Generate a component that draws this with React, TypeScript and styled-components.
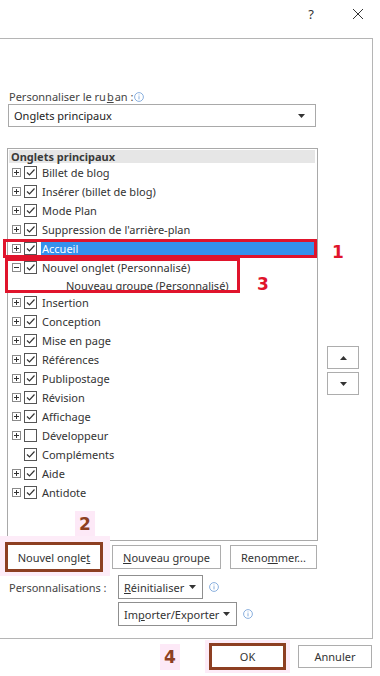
import styled, { createGlobalStyle, css } from "styled-components"

const GlobalStyle = createGlobalStyle`
  html, body {
    margin: 0;
    padding: 0;
    background: #ffffff;
  }
  body {
    font-family: "Noto Sans", "Open Sans", sans-serif;
    font-size: 11px;
    color: #2b2b2b;
  }
`

const Window = styled.div`
  width: 380px;
  height: 676px;
  position: relative;
  overflow: hidden;
  background: #fff;
`

const TitleBar = styled.div`
  height: 38px;
  display: flex;
  justify-content: flex-end;
  align-items: flex-start;
  gap: 38px;
  padding: 6px 16px 0 0;
  box-sizing: border-box;
`

const TitleButton = styled.div`
  height: 16px;
  display: flex;
  align-items: center;
  font-size: 13px;
  color: #333;
`

const Panel = styled.div`
  width: 373px;
  height: 601px;
  box-sizing: border-box;
  border: 1px solid #b5b5b5;
  border-left: none;
  display: flex;
  padding-top: 51px;
`

const LeftColumn = styled.div`
  width: 318px;
  display: flex;
  flex-direction: column;
`

const RightColumn = styled.div`
  flex: 1;
  display: flex;
  flex-direction: column;
  gap: 3px;
  padding: 256px 0 0 9px;
`

const FieldLabel = styled.div`
  padding-left: 9px;
  height: 14px;
  line-height: 14px;
  display: flex;
  align-items: center;
  gap: 1px;
  color: #444;
`

const DropDown = styled.div`
  margin: 0 0 0 8px;
  height: 23px;
  width: 308px;
  box-sizing: border-box;
  border: 1px solid #a9a9a9;
  display: flex;
  align-items: center;
  justify-content: space-between;
  padding: 0 10px 0 5px;
  color: #222;
`

const ListWrap = styled.div`
  position: relative;
  margin: 21px 0 0 7px;
`

const ListBox = styled.div`
  width: 311px;
  height: 393px;
  box-sizing: border-box;
  border: 1px solid #a9a9a9;
  padding: 1px 1px 0 1px;
  display: flex;
  flex-direction: column;
`

const ListHeader = styled.div`
  height: 13px;
  line-height: 13px;
  background: #e6e6e6;
  font-weight: 700;
  color: #3a3a3a;
  padding-left: 2px;
  margin-right: 1px;
`

const Row = styled.div<{ $h?: number }>`
  height: ${(p) => p.$h ?? 19}px;
  display: flex;
  align-items: center;
  padding-left: 3px;
  color: #333;
`

const Expander = styled.div<{ $hidden?: boolean }>`
  width: 9px;
  height: 9px;
  box-sizing: border-box;
  border: 1px solid #8a8a8a;
  position: relative;
  margin-right: 3px;
  visibility: ${(p) => (p.$hidden ? "hidden" : "visible")};
  &::before {
    content: "";
    position: absolute;
    left: 1px;
    top: 3px;
    width: 5px;
    height: 1px;
    background: #333;
  }
`

const Plus = styled(Expander)`
  &::after {
    content: "";
    position: absolute;
    left: 3px;
    top: 1px;
    width: 1px;
    height: 5px;
    background: #333;
  }
`

const Box = styled.div`
  width: 13px;
  height: 13px;
  box-sizing: border-box;
  border: 1px solid #555;
  margin-right: 4px;
  display: flex;
  align-items: center;
  justify-content: center;
  background: #fff;
`

const RowText = styled.span<{ $selected?: boolean; $indent?: number }>`
  height: 17px;
  line-height: 17px;
  padding: 0 2px 0 1px;
  margin-left: ${(p) => p.$indent ?? 0}px;
  ${(p) =>
    p.$selected &&
    css`
      flex: 1;
      background: #3591ec;
      color: #fff;
    `}
`

const Annotation = styled.div<{ $x: number; $y: number; $w: number; $h: number }>`
  position: absolute;
  left: ${(p) => p.$x}px;
  top: ${(p) => p.$y}px;
  width: ${(p) => p.$w}px;
  height: ${(p) => p.$h}px;
  box-sizing: border-box;
  border: 3px solid #e0142c;
`

const Mark = styled.div<{ $x: number; $y: number; $color: string; $halo?: boolean }>`
  position: absolute;
  left: ${(p) => p.$x}px;
  top: ${(p) => p.$y}px;
  font-family: "DejaVu Sans", sans-serif;
  font-weight: 700;
  font-size: 17px;
  line-height: 22px;
  color: ${(p) => p.$color};
  padding: 2px 4px;
  ${(p) =>
    p.$halo &&
    css`
      background: #fde9f7;
    `}
`

const ButtonRow = styled.div`
  display: flex;
  align-items: center;
  gap: 9px;
  margin-top: 1px;
  height: 30px;
  padding-left: 5px;
  position: relative;
`

const Halo = styled.div`
  position: absolute;
  left: -5px;
  top: -6px;
  width: 115px;
  height: 40px;
  background: #fdecf8;
`

const Button = styled.div<{ $w: number; $h?: number; $marked?: boolean }>`
  position: relative;
  width: ${(p) => p.$w}px;
  height: ${(p) => p.$h ?? 24}px;
  box-sizing: border-box;
  border: 1px solid #adadad;
  background: #fff;
  display: flex;
  align-items: center;
  justify-content: center;
  color: #333;
  ${(p) =>
    p.$marked &&
    css`
      border: 3px solid #8d3f22;
    `}
`

const OptionRow = styled.div`
  display: flex;
  align-items: center;
  height: 24px;
  margin-top: 3px;
`

const OptionLabel = styled.div`
  width: 109px;
  padding-left: 9px;
  color: #444;
`

const SmallDrop = styled.div<{ $w: number }>`
  width: ${(p) => p.$w}px;
  height: 24px;
  box-sizing: border-box;
  border: 1px solid #8f8f8f;
  display: flex;
  align-items: center;
  justify-content: space-between;
  padding: 0 6px 0 5px;
  margin-right: 6px;
  color: #333;
`

const MoveButton = styled.div`
  width: 32px;
  height: 23px;
  box-sizing: border-box;
  border: 1px solid #adadad;
  display: flex;
  align-items: center;
  justify-content: center;
`

const Footer = styled.div`
  height: 34px;
  display: flex;
  align-items: center;
  justify-content: flex-end;
  gap: 8px;
  padding-right: 8px;
  position: relative;
`

const OkHalo = styled.div`
  padding: 3px 4px;
  background: #fdecf8;
  display: flex;
`

const Key = styled.span`
  text-decoration: underline;
`

const Caret = ({ up }: { up?: boolean }) => (
  <svg width="7" height="4" viewBox="0 0 7 4">
    <polygon points={up ? "0,4 7,4 3.5,0" : "0,0 7,0 3.5,4"} fill="#333" />
  </svg>
)

const Info = () => (
  <svg width="10" height="10" viewBox="0 0 10 10">
    <circle cx="5" cy="5" r="4.4" fill="none" stroke="#7da7da" strokeWidth="0.9" />
    <rect x="4.55" y="4.2" width="0.9" height="3.2" fill="#7da7da" />
    <rect x="4.55" y="2.5" width="0.9" height="0.9" fill="#7da7da" />
  </svg>
)

const Check = () => (
  <svg width="11" height="11" viewBox="0 0 11 11">
    <polyline points="2,5.5 4.5,8 9.5,2.5" fill="none" stroke="#333" strokeWidth="1.2" />
  </svg>
)

type Tab = { label: string; expand?: "plus" | "minus" | "none"; checked?: boolean; selected?: boolean }

const tabsTop: Tab[] = [
  { label: "Billet de blog" },
  { label: "Insérer (billet de blog)" },
  { label: "Mode Plan" },
  { label: "Suppression de l'arrière-plan" },
  { label: "Accueil", selected: true },
  { label: "Nouvel onglet (Personnalisé)", expand: "minus" },
]

const tabsBottom: Tab[] = [
  { label: "Insertion" },
  { label: "Conception" },
  { label: "Mise en page" },
  { label: "Références" },
  { label: "Publipostage" },
  { label: "Révision" },
  { label: "Affichage" },
  { label: "Développeur", checked: false },
  { label: "Compléments", expand: "none" },
  { label: "Aide" },
  { label: "Antidote" },
]

const TabRow = ({ tab }: { tab: Tab }) => {
  const expand = tab.expand ?? "plus"
  return (
    <Row>
      {expand === "plus" ? <Plus /> : <Expander $hidden={expand === "none"} />}
      <Box>{tab.checked !== false && <Check />}</Box>
      <RowText $selected={tab.selected}>{tab.label}</RowText>
    </Row>
  )
}

export default function App() {
  return (
    <>
      <GlobalStyle />
      <Window>
        <TitleBar>
          <TitleButton>?</TitleButton>
          <TitleButton>
            <svg width="12" height="12" viewBox="0 0 12 12">
              <path d="M1 1 L11 11 M11 1 L1 11" stroke="#333" strokeWidth="1" />
            </svg>
          </TitleButton>
        </TitleBar>

        <Panel>
          <LeftColumn>
            <FieldLabel>
              Personnaliser le ru<Key>b</Key>an :<Info />
            </FieldLabel>
            <DropDown>
              Onglets principaux
              <Caret />
            </DropDown>

            <ListWrap>
              <ListBox>
                <ListHeader>Onglets principaux</ListHeader>
                {tabsTop.map((t) => (
                  <TabRow key={t.label} tab={t} />
                ))}
                <Row $h={16}>
                  <RowText $indent={53}>Nouveau groupe (Personnalisé)</RowText>
                </Row>
                {tabsBottom.map((t) => (
                  <TabRow key={t.label} tab={t} />
                ))}
              </ListBox>
              <Annotation $x={-4} $y={91} $w={314} $h={19} />
              <Annotation $x={-2} $y={110} $w={235} $h={35} />
              <Mark $x={321} $y={91} $color="#e0142c">1</Mark>
              <Mark $x={246} $y={123} $color="#e0142c">3</Mark>
              <Mark $x={68} $y={363} $color="#8d3f22" $halo>2</Mark>
            </ListWrap>

            <ButtonRow>
              <Halo />
              <Button $w={98} $h={30} $marked>
                Nouvel ongle<Key>t</Key>
              </Button>
              <Button $w={109}>
                <Key>N</Key>ouveau groupe
              </Button>
              <Button $w={87}>
                Reno<Key>m</Key>mer...
              </Button>
            </ButtonRow>

            <OptionRow>
              <OptionLabel>Personnalisations :</OptionLabel>
              <SmallDrop $w={85}>
                <span>
                  <Key>R</Key>éinitialiser
                </span>
                <Caret />
              </SmallDrop>
              <Info />
            </OptionRow>
            <OptionRow>
              <OptionLabel />
              <SmallDrop $w={119}>
                <span>
                  Im<Key>p</Key>orter/Exporter
                </span>
                <Caret />
              </SmallDrop>
              <Info />
            </OptionRow>
          </LeftColumn>

          <RightColumn>
            <MoveButton>
              <Caret up />
            </MoveButton>
            <MoveButton>
              <Caret />
            </MoveButton>
          </RightColumn>
        </Panel>

        <Footer>
          <Mark $x={160} $y={5} $color="#8d3f22" $halo>
            4
          </Mark>
          <OkHalo>
            <Button $w={77} $h={27} $marked>
              OK
            </Button>
          </OkHalo>
          <Button $w={74} $h={23}>
            Annuler
          </Button>
        </Footer>
      </Window>
    </>
  )
}
